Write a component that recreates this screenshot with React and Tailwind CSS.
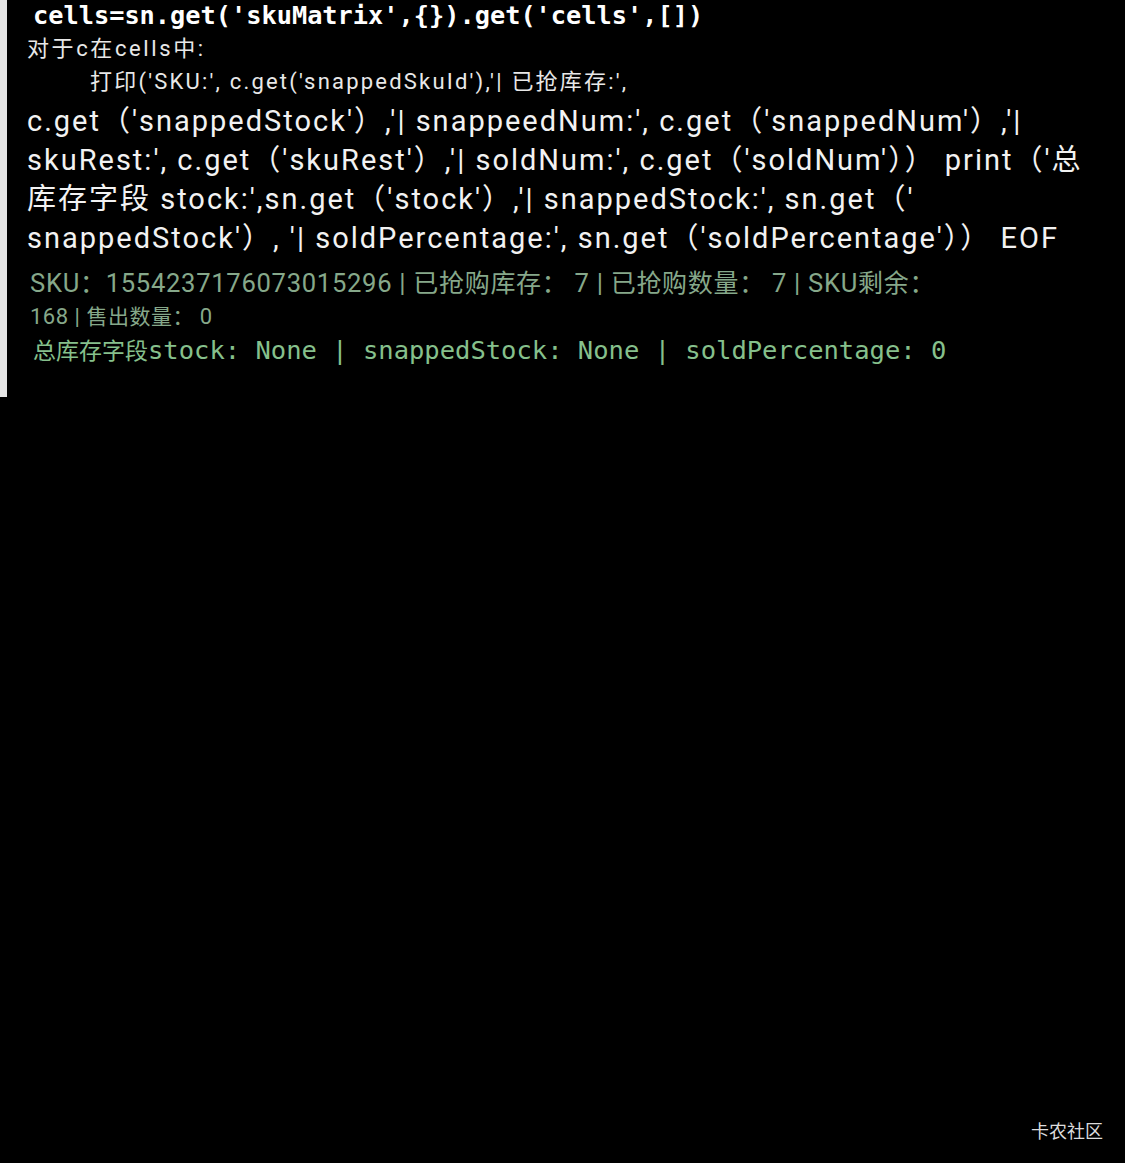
import React from 'react';

const mono = { fontFamily: '"DejaVu Sans Mono", "Noto Sans CJK SC", monospace' };
const sans = { fontFamily: 'Roboto, "Noto Sans CJK SC", sans-serif' };

const codeLines = [
  "c.get（'snappedStock'）,'| snappeedNum:', c.get（'snappedNum'）,'|",
  "skuRest:', c.get（'skuRest'）,'| soldNum:', c.get（'soldNum'）） print（'总",
  "库存字段 stock:',sn.get（'stock'）,'| snappedStock:', sn.get（'",
  "snappedStock'）, '| soldPercentage:', sn.get（'soldPercentage'）） EOF",
];

const Cjk = ({ children, size }) => (
  <span className={size === 'sm' ? 'text-[21px]' : 'text-[25px]'}>{children}</span>
);

export default function App() {
  return (
    <div className="w-[1125px] h-[1163px] bg-black flex flex-col overflow-hidden">
      <div className="flex">
        <div className="w-[7px] h-[397px] bg-[#e6e6e6] shrink-0" />
        <div className="flex flex-col">
          <div style={mono} className="h-[32px] leading-[32px] pl-[26px] text-[25.3px] font-bold text-white whitespace-pre">
            cells=sn.get('skuMatrix',{'{}'}).get('cells',[])
          </div>
          <div style={sans} className="h-[34px] leading-[34px] pl-[20px] text-[22px] tracking-[2.6px] text-[#e8e8e8] whitespace-pre">
            对于c在cells中:
          </div>
          <div style={sans} className="h-[32px] leading-[32px] pl-[83px] text-[22px] tracking-[2.2px] text-[#e8e8e8] whitespace-pre">
            打印('SKU:', c.get('snappedSkuId'),'| 已抢库存:',
          </div>
          <div style={sans} className="mt-[4px] pl-[20px] text-[29px] leading-[39px] tracking-[2px] text-[#f2f2f2]">
            {codeLines.map((l) => (
              <div key={l} className="whitespace-pre">{l}</div>
            ))}
          </div>
          <div style={sans} className="mt-[9px] pl-[23px] text-[#86a88a]">
            <div className="h-[33px] leading-[33px] text-[25.6px] tracking-[0.7px] whitespace-pre">
              SKU<Cjk>：</Cjk>1554237176073015296 | <Cjk>已抢购库存：</Cjk> 7 | <Cjk>已抢购数量：</Cjk> 7 | SKU<Cjk>剩余：</Cjk>
            </div>
            <div className="h-[33px] leading-[33px] text-[22px] tracking-[0.5px] whitespace-pre">
              168 | <Cjk size="sm">售出数量：</Cjk> 0
            </div>
          </div>
          <div style={mono} className="h-[34px] leading-[34px] pl-[26px] text-[25.5px] text-[#86c08c] whitespace-pre">
            <span className="text-[23px]">总库存字段</span>stock: None | snappedStock: None | soldPercentage: 0
          </div>
        </div>
      </div>
      <div className="flex-1 flex justify-end items-end pr-[22px] pb-[20px]">
        <span style={sans} className="text-[18px] leading-[22px] text-[#dcdcdc]">卡农社区</span>
      </div>
    </div>
  );
}
